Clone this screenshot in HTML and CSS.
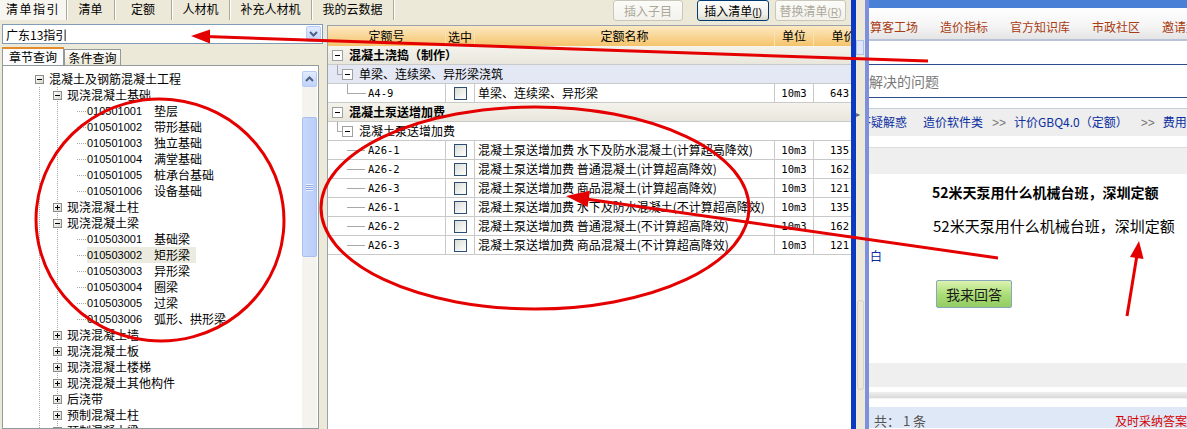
FILE: index.html
```html
<!DOCTYPE html>
<html lang="zh-CN">
<head>
  <meta charset="UTF-8">
  <title>清单指引</title>
  <link rel="stylesheet" href="styles.css">
</head>
<body>
<div class="screen">

  <div class="app">
    <div class="tabbar">
      <div class="tab on">清单指引</div>
      <div class="tab">清单</div>
      <div class="tab">定额</div>
      <div class="tab">人材机</div>
      <div class="tab">补充人材机</div>
      <div class="tab">我的云数据</div>
      <div class="btn off b1">插入子目</div>
      <div class="btn b2">插入清单<span class="key">(<u>I</u>)</span></div>
      <div class="btn off b3">替换清单<span class="key">(<u>R</u>)</span></div>
    </div>

    <div class="main">
      <div class="left">
        <div class="combo">
          <span class="combo-text">广东13指引</span>
          <span class="drop">
            <svg width="9" height="6" viewBox="0 0 9 6"><path d="M1 1 L4.5 4.5 L8 1" fill="none" stroke="#4d6185" stroke-width="2"/></svg>
          </span>
        </div>
        <div class="subtabs">
          <div class="stab on">章节查询</div>
          <div class="stab">条件查询</div>
        </div>
        <div class="panel">
          <div class="tree">
            <div class="row l1"><span class="exp"></span><span class="txt">混凝土及钢筋混凝土工程</span></div>
            <div class="kids">
              <div class="row l2"><span class="exp"></span><span class="txt">现浇混凝土基础</span></div>
              <div class="row l3"><span class="dots"></span><span class="item"><span class="code">010501001</span><span class="name">垫层</span></span></div>
              <div class="row l3"><span class="dots"></span><span class="item"><span class="code">010501002</span><span class="name">带形基础</span></span></div>
              <div class="row l3"><span class="dots"></span><span class="item"><span class="code">010501003</span><span class="name">独立基础</span></span></div>
              <div class="row l3"><span class="dots"></span><span class="item"><span class="code">010501004</span><span class="name">满堂基础</span></span></div>
              <div class="row l3"><span class="dots"></span><span class="item"><span class="code">010501005</span><span class="name">桩承台基础</span></span></div>
              <div class="row l3"><span class="dots"></span><span class="item"><span class="code">010501006</span><span class="name">设备基础</span></span></div>
              <div class="row l2"><span class="exp plus"></span><span class="txt">现浇混凝土柱</span></div>
              <div class="row l2"><span class="exp"></span><span class="txt">现浇混凝土梁</span></div>
              <div class="row l3"><span class="dots"></span><span class="item"><span class="code">010503001</span><span class="name">基础梁</span></span></div>
              <div class="row l3"><span class="dots"></span><span class="item sel"><span class="code">010503002</span><span class="name">矩形梁</span></span></div>
              <div class="row l3"><span class="dots"></span><span class="item"><span class="code">010503003</span><span class="name">异形梁</span></span></div>
              <div class="row l3"><span class="dots"></span><span class="item"><span class="code">010503004</span><span class="name">圈梁</span></span></div>
              <div class="row l3"><span class="dots"></span><span class="item"><span class="code">010503005</span><span class="name">过梁</span></span></div>
              <div class="row l3"><span class="dots"></span><span class="item"><span class="code">010503006</span><span class="name">弧形、拱形梁</span></span></div>
              <div class="row l2"><span class="exp plus"></span><span class="txt">现浇混凝土墙</span></div>
              <div class="row l2"><span class="exp plus"></span><span class="txt">现浇混凝土板</span></div>
              <div class="row l2"><span class="exp plus"></span><span class="txt">现浇混凝土楼梯</span></div>
              <div class="row l2"><span class="exp plus"></span><span class="txt">现浇混凝土其他构件</span></div>
              <div class="row l2"><span class="exp plus"></span><span class="txt">后浇带</span></div>
              <div class="row l2"><span class="exp plus"></span><span class="txt">预制混凝土柱</span></div>
              <div class="row l2"><span class="exp plus"></span><span class="txt">预制混凝土梁</span></div>
            </div>
          </div>
          <div class="vscroll">
            <div class="sb-btn">
              <svg width="9" height="6" viewBox="0 0 9 6"><path d="M1 5 L4.5 1.5 L8 5" fill="none" stroke="#4d6185" stroke-width="2"/></svg>
            </div>
            <div class="sb-track"></div>
            <div class="sb-thumb"><span class="grip"></span></div>
          </div>
        </div>
      </div>

      <div class="grid">
        <div class="gh">
          <div class="c1">定额号</div>
          <div class="c2">选中</div>
          <div class="c3">定额名称</div>
          <div class="c4">单位</div>
          <div class="c5">单价</div>
        </div>
        <div class="gr grp"><span class="exp box"></span><span>混凝土浇捣（制作）</span></div>
        <div class="gr sub blue"><span class="exp box"></span><span>单梁、连续梁、异形梁浇筑</span></div>
        <div class="gr rec last">
          <div class="c1 mono">A4-9</div><div class="c2"><span class="chk"></span></div>
          <div class="c3">单梁、连续梁、异形梁</div><div class="c4 mono">10m3</div><div class="c5 mono">643</div>
        </div>
        <div class="gr grp"><span class="exp box"></span><span>混凝土泵送增加费</span></div>
        <div class="gr sub"><span class="exp box"></span><span>混凝土泵送增加费</span></div>
        <div class="gr rec">
          <div class="c1 mono">A26-1</div><div class="c2"><span class="chk"></span></div>
          <div class="c3">混凝土泵送增加费 水下及防水混凝土(计算超高降效)</div><div class="c4 mono">10m3</div><div class="c5 mono">135</div>
        </div>
        <div class="gr rec">
          <div class="c1 mono">A26-2</div><div class="c2"><span class="chk"></span></div>
          <div class="c3">混凝土泵送增加费 普通混凝土(计算超高降效)</div><div class="c4 mono">10m3</div><div class="c5 mono">162</div>
        </div>
        <div class="gr rec">
          <div class="c1 mono">A26-3</div><div class="c2"><span class="chk"></span></div>
          <div class="c3">混凝土泵送增加费 商品混凝土(计算超高降效)</div><div class="c4 mono">10m3</div><div class="c5 mono">121</div>
        </div>
        <div class="gr rec">
          <div class="c1 mono">A26-1</div><div class="c2"><span class="chk"></span></div>
          <div class="c3">混凝土泵送增加费 水下及防水混凝土(不计算超高降效)</div><div class="c4 mono">10m3</div><div class="c5 mono">135</div>
        </div>
        <div class="gr rec">
          <div class="c1 mono">A26-2</div><div class="c2"><span class="chk"></span></div>
          <div class="c3">混凝土泵送增加费 普通混凝土(不计算超高降效)</div><div class="c4 mono">10m3</div><div class="c5 mono">162</div>
        </div>
        <div class="gr rec">
          <div class="c1 mono">A26-3</div><div class="c2"><span class="chk"></span></div>
          <div class="c3">混凝土泵送增加费 商品混凝土(不计算超高降效)</div><div class="c4 mono">10m3</div><div class="c5 mono">121</div>
        </div>
      </div>
    </div>
  </div>

  <div class="edge-dark"></div>
  <div class="edge-mid">
    <span class="mini-grip"></span>
    <span class="mini-arrow">▸</span>
    <span class="mini-box"></span>
  </div>
  <div class="edge-light"></div>

  <div class="web">
    <div class="w-top"></div>
    <div class="w-nav">
      <span>算客工场</span><span>造价指标</span><span>官方知识库</span><span>市政社区</span><span>邀请好友</span>
    </div>
    <div class="w-search">
      <div class="w-input">解决的问题</div>
    </div>
    <div class="w-crumb">
      <span class="cb1">答疑解惑</span><span class="cb2">造价软件类</span><span class="gt">&gt;&gt;</span><span class="cb3">计价GBQ4.0（定额）</span><span class="gt">&gt;&gt;</span><span>费用汇总</span>
    </div>
    <div class="w-band"></div>
    <div class="w-question">
      <div class="q-title">52米天泵用什么机械台班，深圳定额</div>
      <div class="q-body">52米天泵用什么机械台班，深圳定额</div>
      <div class="q-side">白</div>
      <div class="q-btn">我来回答</div>
    </div>
    <div class="w-band low"></div>
    <div class="w-rule"></div>
    <div class="w-foot">
      <span class="count">共： 1 条</span>
      <span class="adopt">及时采纳答案可</span>
    </div>
  </div>

  <svg class="marks" width="1187" height="429" viewBox="0 0 1187 429">
    <g fill="none" stroke="#e50000" stroke-width="3">
      <line x1="928" y1="61" x2="206" y2="36.6"/>
      <ellipse cx="160" cy="220" rx="124" ry="121" transform="rotate(6 160 220)"/>
      <ellipse cx="535" cy="208" rx="214" ry="101"/>
      <line x1="998" y1="258" x2="586" y2="199"/>
      <line x1="1127" y1="316" x2="1137" y2="255"/>
    </g>
    <g fill="#e50000">
      <polygon points="191,36 210,29.6 210,43.4"/>
      <polygon points="566,196 590,190.8 587.6,207"/>
      <polygon points="1139,241 1143.6,259 1130,257"/>
    </g>
  </svg>

</div>
</body>
</html>
```

FILE: styles.css
```css
* {
  box-sizing: border-box;
}

body {
  margin: 0;
  font-family: "Noto Sans CJK SC", sans-serif;
  font-size: 12px;
  color: #000;
}

.screen {
  position: relative;
  display: flex;
  width: 1187px;
  height: 429px;
  overflow: hidden;
  background: #ece9d8;
}

/* ---------- left application ---------- */

.app {
  width: 851px;
  flex: none;
  display: flex;
  flex-direction: column;
}

.tabbar {
  height: 22px;
  display: flex;
  align-items: flex-start;
  flex: none;
}

.tab {
  height: 20px;
  line-height: 17px;
  text-align: center;
  border-right: 1px solid #aca899;
  box-shadow: 1px 0 0 #fff;
  flex: none;
}

.tab:nth-child(1) { width: 67px; }
.tab:nth-child(2) { width: 48px; }
.tab:nth-child(3) { width: 57px; }
.tab:nth-child(4) { width: 58px; }
.tab:nth-child(5) { width: 82px; }
.tab:nth-child(6) { width: 82px; }

.tab.on {
  background: #f7f6f1;
  letter-spacing: 1.5px;
}

.btn {
  height: 21px;
  line-height: 19px;
  border: 1px solid #003c74;
  border-radius: 3px;
  background: linear-gradient(#ffffff, #f0efe8 70%, #dcd9cc);
  text-align: center;
  flex: none;
}

.btn.off {
  border-color: #c9c7ba;
  color: #aca899;
  background: linear-gradient(#fbfbf9, #f3f2ec);
}

.b1 { width: 70px; margin-left: auto; }
.b2 { width: 72px; margin-left: 14px; }
.b3 { width: 71px; margin-left: 6px; margin-right: 5px; }

.key {
  font-size: 10px;
  font-family: "Liberation Sans", sans-serif;
}

.main {
  flex: 1;
  display: flex;
  min-height: 0;
}

.left {
  width: 323px;
  flex: none;
  display: flex;
  flex-direction: column;
  padding-left: 2px;
}

.combo {
  margin-top: 2px;
  height: 20px;
  border: 1px solid #7f9db9;
  background: #fff;
  display: flex;
  align-items: center;
  padding: 0 1px 0 3px;
}

.combo-text {
  flex: 1;
}

.drop {
  width: 15px;
  height: 16px;
  border: 1px solid #b9cdf6;
  border-radius: 2px;
  background: linear-gradient(#e1ebfe, #c1d3fb);
  display: flex;
  align-items: center;
  justify-content: center;
}

.subtabs {
  display: flex;
  align-items: flex-end;
  margin-top: 3px;
  height: 18px;
}

.stab {
  height: 16px;
  line-height: 15px;
  width: 57px;
  text-align: center;
  border: 1px solid #919b9c;
  border-bottom: none;
  background: linear-gradient(#ffffff, #ece9d8);
}

.stab.on {
  height: 18px;
  width: 62px;
  background: #fcfcfe;
  border-top: 2px solid #e68b2c;
  line-height: 16px;
}

.panel {
  flex: 1;
  min-height: 0;
  display: flex;
  width: 317px;
  border: 1px solid #919b9c;
  background: #fff;
}

.tree {
  flex: 1;
  padding-top: 5px;
  overflow: hidden;
}

.row {
  height: 16px;
  line-height: 16px;
  display: flex;
  align-items: center;
  white-space: nowrap;
}

.l1 { padding-left: 32px; }
.l2 { padding-left: 50px; }
.l3 { padding-left: 74px; }

.txt {
  margin-left: 5px;
}

.exp {
  position: relative;
  width: 9px;
  height: 9px;
  flex: none;
  border: 1px solid #8c8c8c;
  background: linear-gradient(135deg, #ffffff, #d9d8cc);
}

.exp::before {
  content: "";
  position: absolute;
  left: 1px;
  right: 1px;
  top: 3px;
  height: 1px;
  background: #000;
}

.exp.plus::after {
  content: "";
  position: absolute;
  top: 1px;
  bottom: 1px;
  left: 3px;
  width: 1px;
  background: #000;
}

.kids {
  background-image:
    linear-gradient(#a8a8a8 50%, transparent 50%),
    linear-gradient(#a8a8a8 50%, transparent 50%);
  background-size: 1px 2px, 1px 2px;
  background-repeat: repeat-y;
  background-position: 36px 0, 54px 0;
}

.dots {
  width: 9px;
  height: 1px;
  margin-right: 1px;
  background: linear-gradient(to right, #a8a8a8 50%, transparent 50%);
  background-size: 2px 1px;
}

.item {
  display: flex;
  padding-right: 6px;
}

.item.sel {
  background: #ecebdf;
}

.code {
  width: 67px;
  font-family: "Liberation Sans", sans-serif;
  font-size: 11px;
}

.vscroll {
  position: relative;
  width: 15px;
  margin: 5px 1px 0 0;
  background: #f4f3ee;
}

.sb-btn {
  height: 16px;
  border: 1px solid #b7cbf5;
  border-radius: 2px;
  background: linear-gradient(#e1ebfe, #c1d3fb);
  display: flex;
  align-items: center;
  justify-content: center;
}

.sb-track {
  height: 30px;
}

.sb-thumb {
  height: 140px;
  border: 1px solid #a9bff0;
  border-radius: 2px;
  background: linear-gradient(to right, #c8d8fc, #b9cdf8);
  display: flex;
  align-items: center;
  justify-content: center;
}

.grip {
  width: 7px;
  height: 7px;
  background: repeating-linear-gradient(#eef3ff 0 1px, #8da7e0 1px 2px);
}

/* ---------- grid ---------- */

.grid {
  flex: 1;
  margin: 3px 0 0 4px;
  background: #fff;
  border: 1px solid #9aa3ad;
  border-right: none;
  border-bottom: none;
  overflow: hidden;
}

.gh {
  display: flex;
  height: 20px;
  line-height: 19px;
  background: linear-gradient(#fde9c2, #f5c46c);
  text-align: center;
}

.gh > div {
  border-right: 1px solid #fbe2b4;
}

.gh > div,
.gr > div {
  flex: none;
  white-space: nowrap;
  overflow: hidden;
}

.c1 { width: 118px; }
.c2 { width: 29px; }
.c3 { width: 300px; }
.c4 { width: 39px; }
.c5 { width: 60px; }

.gr {
  position: relative;
  display: flex;
  align-items: center;
  height: 19px;
  line-height: 18px;
  border-bottom: 1px solid #c9c9c9;
  white-space: nowrap;
}

.gr.grp {
  font-weight: bold;
  padding-left: 4px;
  background: linear-gradient(#f4f3ec, #e9e7dc);
}

.gr.sub {
  padding-left: 14px;
}

.gr.sub.blue {
  background: #e4e8f4;
}

.gr.sub::before {
  content: "";
  position: absolute;
  left: 9px;
  top: 0;
  width: 5px;
  height: 9px;
  border-left: 1px solid #a8a8a8;
  border-bottom: 1px solid #a8a8a8;
}

.exp.box {
  width: 11px;
  height: 11px;
  border-color: #a0a0a0;
  background: #fff;
  margin-right: 6px;
}

.exp.box::before {
  left: 2px;
  right: 2px;
  top: 4px;
}

.gr.rec > div {
  height: 18px;
  border-right: 1px solid #c9c9c9;
}

.gr.rec .c1 {
  position: relative;
  padding-left: 40px;
}

.gr.rec .c1::before {
  content: "";
  position: absolute;
  left: 19px;
  top: 9px;
  width: 18px;
  border-top: 1px solid #a8a8a8;
}

.gr.rec.last .c1::before {
  top: 0;
  height: 9px;
  border-top: none;
  border-left: 1px solid #a8a8a8;
  border-bottom: 1px solid #a8a8a8;
}

.mono {
  font-family: "DejaVu Sans Mono", monospace;
  font-size: 10.5px;
}

.c2 {
  display: flex;
  align-items: center;
  justify-content: center;
}

.chk {
  width: 13px;
  height: 13px;
  border: 1px solid #2b4f72;
  background: linear-gradient(135deg, #dcdcd5, #ffffff);
}

.gr.rec .c3 {
  padding-left: 3px;
  font-size: 12px;
}

.gr.rec .c4 {
  text-align: center;
}

.gr.rec .c5 {
  padding-left: 16px;
  border-right: none;
}

/* ---------- window edge ---------- */

.edge-dark {
  width: 5px;
  flex: none;
  background: #0b39c2;
}

.edge-mid {
  position: relative;
  width: 9px;
  flex: none;
  background: #ece9d8;
}

.mini-grip {
  position: absolute;
  left: 0;
  top: 40px;
  width: 8px;
  height: 15px;
  border: 1px solid #b0c0e8;
  background: #dfe6f8;
}

.mini-arrow {
  position: absolute;
  left: 0;
  top: 108px;
  font-size: 8px;
  color: #4d6185;
}

.mini-box {
  position: absolute;
  left: 1px;
  top: 300px;
  width: 7px;
  height: 90px;
  border: 1px solid #d6d3c4;
  border-radius: 3px;
}

.edge-light {
  width: 4px;
  flex: none;
  background: #7e8fdd;
}

/* ---------- web page ---------- */

.web {
  flex: 1;
  min-width: 0;
  background: #fff;
  overflow: hidden;
  white-space: nowrap;
}

.w-top {
  height: 8px;
  background: #4a81d6;
}

.w-nav {
  height: 33px;
  padding: 5px 0 0 1px;
  line-height: 28px;
  background: linear-gradient(#ffffff, #f4f4f4 60%, #e4e4e4);
  border-bottom: 2px solid #b8c3d7;
  color: #a83c12;
  display: flex;
  gap: 22px;
}

.w-search {
  padding-top: 23px;
  height: 67px;
}

.w-input {
  height: 34px;
  line-height: 32px;
  border-top: 1px solid #2d4d8e;
  border-bottom: 1px solid #2d4d8e;
  color: #7a7a7a;
  font-size: 14px;
}

.w-crumb {
  height: 28px;
  line-height: 26px;
  border-top: 1px solid #c6cfde;
  background: #eeeeee;
  color: #0b2ea0;
}

.w-crumb span {
  display: inline-block;
}

.cb1 { margin-left: -10px; margin-right: 16px; }
.cb2 { margin-right: 9px; }
.cb3 { margin-right: 13px; }

.gt {
  color: #777;
  margin-right: 8px;
  font-family: "Liberation Sans", sans-serif;
}

.w-band {
  height: 38px;
  border-top: 11px solid #fff;
  background: #efefef;
  box-shadow: inset 0 1px 0 #dcdcdc;
}

.w-question {
  height: 189px;
  padding: 8px 0 0 63px;
  background: #fff;
}

.q-title {
  font-weight: bold;
  font-size: 14px;
  line-height: 20px;
}

.q-body {
  font-size: 15px;
  line-height: 24px;
  margin-top: 12px;
  padding-left: 1px;
}

.q-side {
  margin: 10px 0 0 -62px;
  line-height: 16px;
  color: #0b2ea0;
}

.q-btn {
  margin: 16px 0 0 4px;
  width: 76px;
  height: 28px;
  line-height: 26px;
  text-align: center;
  font-size: 14px;
  color: #1a1a1a;
  border: 1px solid #86a8b8;
  border-radius: 2px;
  background: linear-gradient(#dcf2b0, #a9dc74 55%, #92cc62);
}

.w-band.low {
  height: 24px;
  border-top: none;
  box-shadow: none;
}

.w-rule {
  height: 20px;
  border-top: 5px solid #fff;
  background: linear-gradient(#f0f0f0, #dadada 40%, #fff 45%);
}

.w-foot {
  height: 21px;
  line-height: 28px;
  background: #dfe8f7;
  display: flex;
  justify-content: space-between;
  padding-left: 5px;
}

.count {
  color: #555;
  font-size: 13px;
}

.adopt {
  color: #d40000;
  margin-right: -12px;
}

/* ---------- red annotations ---------- */

.marks {
  position: absolute;
  left: 0;
  top: 0;
  pointer-events: none;
}
```
